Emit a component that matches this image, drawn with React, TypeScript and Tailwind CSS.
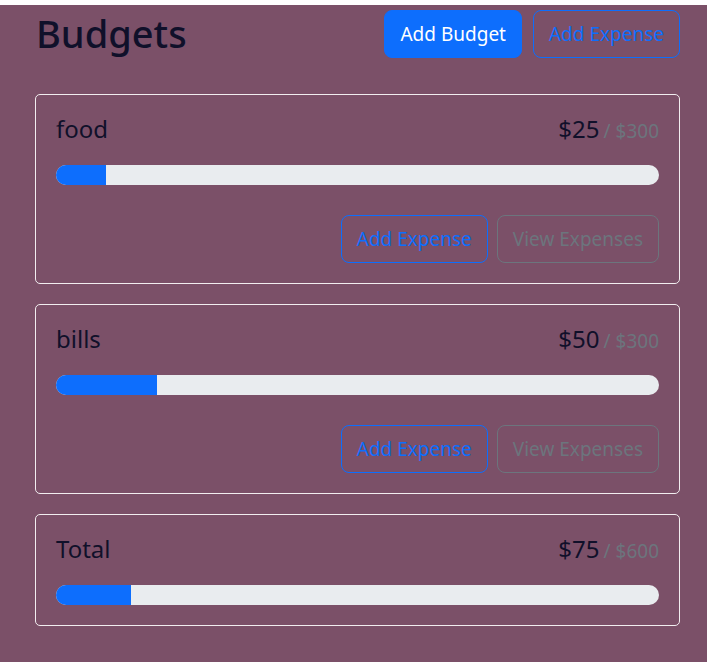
import React from 'react';

interface Budget {
  name: string;
  amount: number;
  max: number;
}

const budgets: Budget[] = [
  { name: 'food', amount: 25, max: 300 },
  { name: 'bills', amount: 50, max: 300 },
];

const font = { fontFamily: '"Noto Sans", "Open Sans", sans-serif' };

const btn = 'px-[15px] py-2 text-[19px] leading-[30px] rounded-lg border';

function BudgetCard({ name, amount, max, hideButtons }: Budget & { hideButtons?: boolean }) {
  const pct = Math.min(100, (amount / max) * 100);
  return (
    <div className="border border-[#f2eef0] rounded-[5px] px-5 pt-5 pb-5">
      <div className="flex items-baseline justify-between h-[29px] mb-[21px]">
        <div className="text-[24px] leading-[1.2] text-[#10102a]">{name}</div>
        <div className="flex items-baseline">
          <span className="text-[24px] leading-[1.2] text-[#10102a]">${amount}</span>
          <span className="text-[19px] text-[#6c757d] ml-[4px]">/ ${max}</span>
        </div>
      </div>

      <div className="h-5 rounded-full bg-[#e9ecef] overflow-hidden">
        <div className="h-full bg-[#0d6efd]" style={{ width: `${pct}%` }} />
      </div>

      {!hideButtons && (
        <div className="flex justify-end gap-[9px] mt-[30px]">
          <button className={`${btn} border-[#0d6efd] text-[#0d6efd]`}>Add Expense</button>
          <button className={`${btn} border-[#6c757d] text-[#6c757d]`}>View Expenses</button>
        </div>
      )}
    </div>
  );
}

export default function App() {
  const total = budgets.reduce((s, b) => s + b.amount, 0);
  const totalMax = budgets.reduce((s, b) => s + b.max, 0);

  return (
    <div className="min-h-screen bg-[#7b5068]" style={font}>
      <div className="h-[5px] bg-white" />
      <div className="pl-[35px] pr-[27px] pt-[5px] pb-8">
        {/* header */}
        <div className="flex items-center justify-between mb-[36px]">
          <h1 className="text-[38px] font-medium leading-[1.2] text-[#10102a] pl-px">Budgets</h1>
          <div className="flex gap-[11px]">
            <button className={`${btn} border-[#0d6efd] bg-[#0d6efd] text-white`}>Add Budget</button>
            <button className={`${btn} border-[#0d6efd] text-[#0d6efd]`}>Add Expense</button>
          </div>
        </div>

        {/* cards */}
        <div className="flex flex-col gap-5">
          {budgets.map((b) => (
            <BudgetCard key={b.name} {...b} />
          ))}
          <BudgetCard name="Total" amount={total} max={totalMax} hideButtons />
        </div>
      </div>
    </div>
  );
}
